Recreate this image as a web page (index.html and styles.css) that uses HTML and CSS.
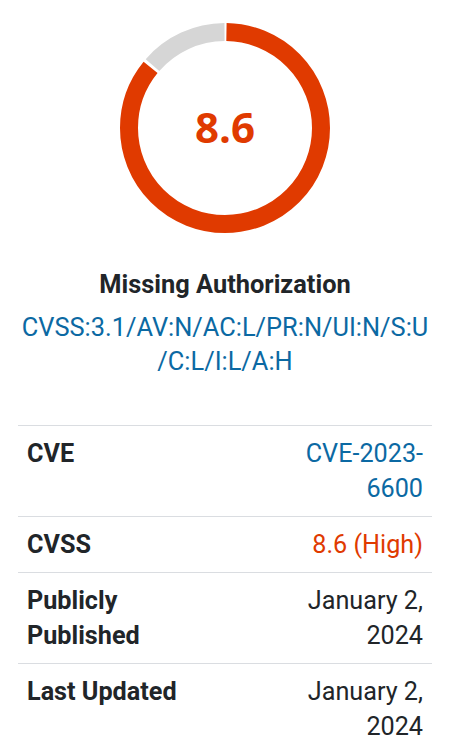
FILE: index.html
```html
<!DOCTYPE html>
<html>
<head>
  <title>CVE-2023-6600</title>
  <link rel="stylesheet" href="styles.css">
</head>
<body>
  <div class="card">
    <div class="score">
      <svg class="ring" width="210" height="210" viewBox="0 0 210 210">
        <g transform="rotate(-90 105 105)">
          <circle cx="105" cy="105" r="96" fill="none" stroke="#e03a00" stroke-width="18"
                  stroke-dasharray="515.7 87.5" stroke-dashoffset="-1.5"></circle>
          <circle cx="105" cy="105" r="96" fill="none" stroke="#d6d6d6" stroke-width="18"
                  stroke-dasharray="81.5 521.7" stroke-dashoffset="-520.2"></circle>
        </g>
      </svg>
      <span class="score-value">8.6</span>
    </div>

    <h2 class="title">Missing Authorization</h2>
    <a class="vector" href="#">CVSS:3.1/AV:N/AC:L/PR:N/UI:N/S:U/C:L/I:L/A:H</a>

    <div class="details">
      <div class="row">
        <div class="label">CVE</div>
        <div class="value"><a href="#">CVE-2023-6600</a></div>
      </div>
      <div class="row">
        <div class="label">CVSS</div>
        <div class="value high">8.6 (High)</div>
      </div>
      <div class="row">
        <div class="label">Publicly Published</div>
        <div class="value">January 2, 2024</div>
      </div>
      <div class="row">
        <div class="label">Last Updated</div>
        <div class="value">January 2, 2024</div>
      </div>
    </div>
  </div>
</body>
</html>
```

FILE: styles.css
```css
body {
  margin: 0;
  background-color: #fff;
  font-family: Roboto, "Liberation Sans", Arial, sans-serif;
  color: #212529;
}
.card {
  padding: 23px 18px 0;
  text-align: center;
}
.score {
  position: relative;
  width: 210px;
  height: 210px;
  margin: 0 auto;
}
.ring {
  display: block;
}
.score-value {
  position: absolute;
  left: 0;
  right: 0;
  top: 74px;
  font-family: "Open Sans", sans-serif;
  font-weight: 700;
  font-size: 42px;
  line-height: 60px;
  color: #e03a00;
}
.title {
  margin: 36px 0 11px;
  font-size: 25.4px;
  line-height: 30px;
  font-weight: 700;
  color: #212529;
}
.vector {
  display: block;
  max-width: 412px;
  margin: 0 auto;
  font-size: 25.4px;
  line-height: 34px;
  color: #0b69a3;
  text-decoration: none;
  overflow-wrap: anywhere;
}
.details {
  margin-top: 47px;
  text-align: left;
}
.row {
  display: grid;
  grid-template-columns: 185px 140px;
  justify-content: space-between;
  padding: 10px 9px;
  border-top: 1px solid #dadde1;
  font-size: 25.2px;
  line-height: 35px;
}
.label {
  font-weight: 700;
}
.value {
  text-align: right;
}
.value a {
  color: #0b69a3;
  text-decoration: none;
}
.high {
  color: #e03a00;
}
```
